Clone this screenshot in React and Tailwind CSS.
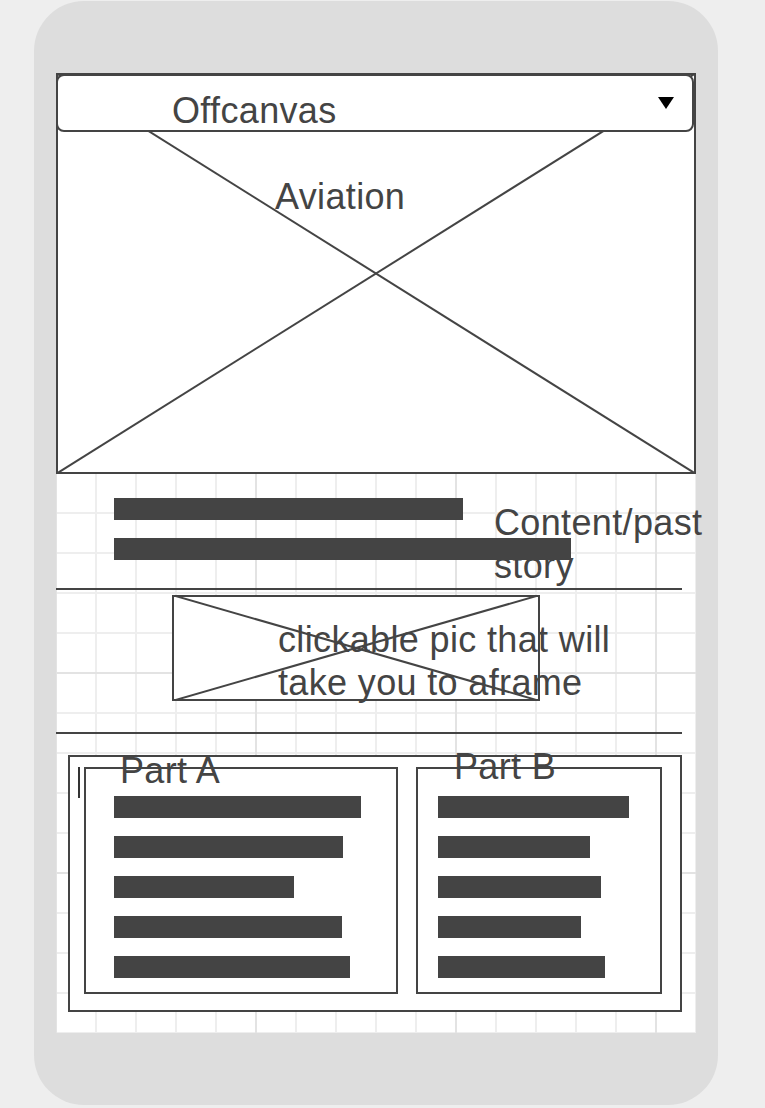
export default function App() {
  const label = "text-[36px] leading-[43px] tracking-[0.35px] whitespace-nowrap text-[#444444]";
  return (
    <div className="w-[765px] h-[1108px] bg-[#eeeeee] pt-px pl-[34px] font-['Liberation_Sans',Arial,sans-serif] text-[#444444] overflow-hidden">
      <div className="w-[684px] h-[1104px] rounded-[50px] bg-[#dddddd] pt-[72px] px-[22px]">
        <div className="w-[640px] h-[960px] flex flex-col bg-white [background-image:linear-gradient(to_right,#e3e3e3_2px,transparent_2px),linear-gradient(to_bottom,#e3e3e3_2px,transparent_2px),linear-gradient(to_right,#eeeeee_2px,transparent_2px),linear-gradient(to_bottom,#eeeeee_2px,transparent_2px)] [background-size:200px_200px,200px_200px,40px_40px,40px_40px] [background-position:-1px_-1px]">
          {/* Image placeholder with header */}
          <div className="relative h-[401px] shrink-0 border-2 border-[#444444] bg-white">
            <svg
              className="absolute -left-[2px] -top-[2px] w-[640px] h-[401px]"
              viewBox="0 0 640 401"
              preserveAspectRatio="none"
            >
              <line x1="0" y1="0" x2="640" y2="401" stroke="#444444" strokeWidth="2" />
              <line x1="640" y1="0" x2="0" y2="401" stroke="#444444" strokeWidth="2" />
            </svg>
            <div className={`absolute -left-[2px] -top-px right-0 h-[58px] rounded-lg border-2 border-[#444444] bg-white pl-[114px] pt-[13px] ${label}`}>
              Offcanvas
              <svg className="absolute right-[18px] top-[21px]" width="16" height="12" viewBox="0 0 16 12">
                <polygon points="0,0 16,0 8,12" fill="#000000" />
              </svg>
            </div>
            <div className={`absolute left-[217px] top-[100px] ${label}`}>Aviation</div>
          </div>

          {/* Section 2 */}
          <div className="relative h-[114px] shrink-0 pt-[24px] pl-[58px] flex flex-col gap-[18px]">
            <div className="w-[349px] h-[22px] bg-[#444444]" />
            <div className="w-[457px] h-[22px] bg-[#444444]" />
            <div className={`absolute left-[438px] top-[27px] ${label}`}>
              Content/past
              <br />
              story
            </div>
          </div>
          <div className="w-[626px] h-[2px] shrink-0 bg-[#444444]" />

          {/* Section 3 */}
          <div className="relative h-[142px] shrink-0 pt-[5px] pl-[116px]">
            <div className="relative w-[368px] h-[106px] border-2 border-[#444444] bg-white">
              <svg
                className="absolute -left-[2px] -top-[2px] w-[368px] h-[106px]"
                viewBox="0 0 368 106"
                preserveAspectRatio="none"
              >
                <line x1="0" y1="0" x2="368" y2="106" stroke="#444444" strokeWidth="2" />
                <line x1="368" y1="0" x2="0" y2="106" stroke="#444444" strokeWidth="2" />
              </svg>
            </div>
            <div className={`absolute left-[222px] top-[28px] ${label}`}>
              clickable pic that will
              <br />
              take you to aframe
            </div>
          </div>
          <div className="w-[626px] h-[2px] shrink-0 bg-[#444444]" />

          {/* Section 4 */}
          <div className="pt-[21px] pl-[12px]">
            <div className="w-[614px] h-[257px] border-2 border-[#444444] bg-white flex items-start pt-[10px]">
              <div className="ml-[8px] w-[2px] h-[31px] bg-[#333333]" />
              <div className="relative ml-[4px] w-[314px] h-[227px] border-2 border-[#444444] pt-[27px] pl-[28px] flex flex-col gap-[18px]">
                <div className="w-[247px] h-[22px] bg-[#444444]" />
                <div className="w-[229px] h-[22px] bg-[#444444]" />
                <div className="w-[180px] h-[22px] bg-[#444444]" />
                <div className="w-[228px] h-[22px] bg-[#444444]" />
                <div className="w-[236px] h-[22px] bg-[#444444]" />
                <div className={`absolute left-[34px] -top-[20px] ${label}`}>Part A</div>
              </div>
              <div className="relative ml-[18px] w-[246px] h-[227px] border-2 border-[#444444] pt-[27px] pl-[20px] flex flex-col gap-[18px]">
                <div className="w-[191px] h-[22px] bg-[#444444]" />
                <div className="w-[152px] h-[22px] bg-[#444444]" />
                <div className="w-[163px] h-[22px] bg-[#444444]" />
                <div className="w-[143px] h-[22px] bg-[#444444]" />
                <div className="w-[167px] h-[22px] bg-[#444444]" />
                <div className={`absolute left-[36px] -top-[24px] ${label}`}>Part B</div>
              </div>
            </div>
          </div>
        </div>
      </div>
    </div>
  );
}
